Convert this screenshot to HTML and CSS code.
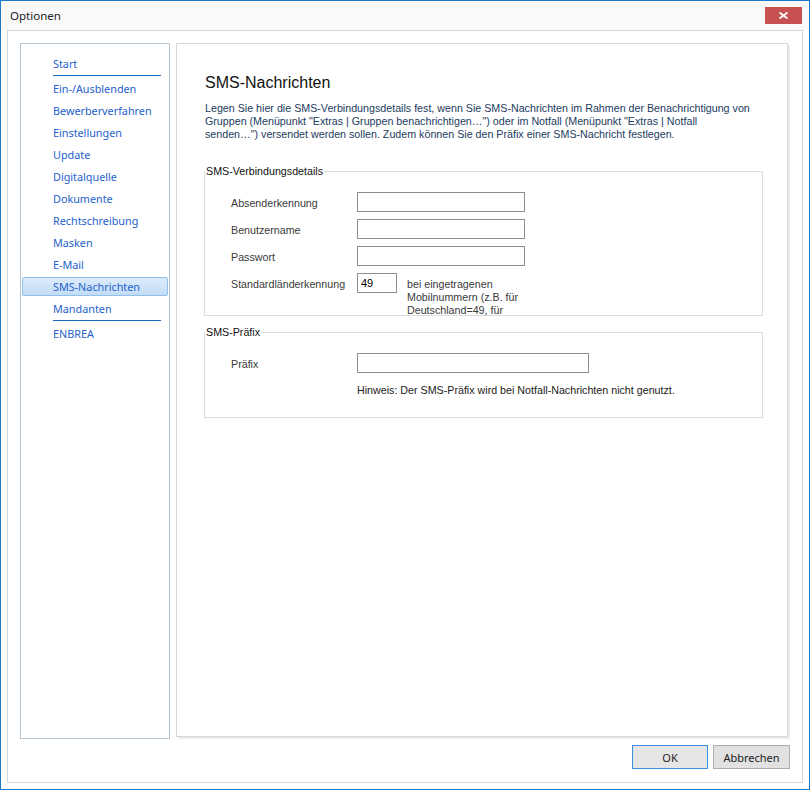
FILE: index.html
```html
<!DOCTYPE html>
<html lang="de">
<head>
    <meta charset="UTF-8">
    <title>Optionen</title>
    <link rel="stylesheet" href="styles.css">
</head>
<body>
    <div class="window">
        <div class="titlebar">
            <span class="title">Optionen</span>
            <button class="close" title="Schließen">
                <svg width="9" height="7" viewBox="0 0 9 7"><path d="M0.5 0.5 L8.5 6.5 M8.5 0.5 L0.5 6.5" stroke="#fff" stroke-width="1.8"/></svg>
            </button>
        </div>

        <div class="frame">
            <div class="panes">
                <ul class="nav">
                    <li class="nav-item">Start</li>
                    <li class="nav-sep"></li>
                    <li class="nav-item">Ein-/Ausblenden</li>
                    <li class="nav-item">Bewerberverfahren</li>
                    <li class="nav-item">Einstellungen</li>
                    <li class="nav-item">Update</li>
                    <li class="nav-item">Digitalquelle</li>
                    <li class="nav-item">Dokumente</li>
                    <li class="nav-item">Rechtschreibung</li>
                    <li class="nav-item">Masken</li>
                    <li class="nav-item">E-Mail</li>
                    <li class="nav-item active">SMS-Nachrichten</li>
                    <li class="nav-item">Mandanten</li>
                    <li class="nav-sep"></li>
                    <li class="nav-item">ENBREA</li>
                </ul>

                <div class="page">
                    <h1>SMS-Nachrichten</h1>
                    <p class="intro">
                        Legen Sie hier die SMS-Verbindungsdetails fest, wenn Sie SMS-Nachrichten im Rahmen der Benachrichtigung von<br>
                        Gruppen (Menüpunkt "Extras | Gruppen benachrichtigen…") oder im Notfall (Menüpunkt "Extras | Notfall<br>
                        senden…") versendet werden sollen. Zudem können Sie den Präfix einer SMS-Nachricht festlegen.
                    </p>

                    <fieldset class="group">
                        <legend>SMS-Verbindungsdetails</legend>
                        <div class="fields">
                            <label for="sender">Absenderkennung</label>
                            <input type="text" id="sender">

                            <label for="user">Benutzername</label>
                            <input type="text" id="user">

                            <label for="password">Passwort</label>
                            <input type="password" id="password">

                            <label for="country">Standardländerkennung</label>
                            <div class="country">
                                <input type="text" id="country" class="short" value="49">
                                <div class="country-note">bei eingetragenen<br>Mobilnummern (z.B. für<br>Deutschland=49, für</div>
                            </div>
                        </div>
                    </fieldset>

                    <fieldset class="group prefix-group">
                        <legend>SMS-Präfix</legend>
                        <div class="fields">
                            <label for="prefix">Präfix</label>
                            <input type="text" id="prefix" class="wide">

                            <span></span>
                            <p class="hint">Hinweis: Der SMS-Präfix wird bei Notfall-Nachrichten nicht genutzt.</p>
                        </div>
                    </fieldset>
                </div>
            </div>

            <div class="buttons">
                <button class="btn default">OK</button>
                <button class="btn">Abbrechen</button>
            </div>
        </div>
    </div>
</body>
</html>
```

FILE: styles.css
```css
* {
    box-sizing: border-box;
}

body {
    margin: 0;
    font-family: "Liberation Sans", Arial, sans-serif;
    font-size: 10.7px;
    color: #333;
    background: #fff;
}

.window {
    width: 810px;
    height: 790px;
    border: 1px solid #1979ca;
    display: flex;
    flex-direction: column;
    background: #fff;
}

.titlebar {
    height: 29px;
    flex: none;
    display: flex;
    justify-content: space-between;
    align-items: flex-start;
    background: #f9f9f9;
    padding: 0 7px 0 9px;
}

.title {
    font-family: "Noto Sans", sans-serif;
    font-size: 11.5px;
    line-height: 30px;
    color: #222;
}

.close {
    margin-top: 6px;
    width: 37px;
    height: 17px;
    border: none;
    padding: 0;
    background: #c75050;
    display: flex;
    align-items: center;
    justify-content: center;
}

.frame {
    flex: 1;
    margin: 0 6px 6px;
    border: 1px solid #d6d6d6;
    padding: 12px 12px 0;
    display: flex;
    flex-direction: column;
}

.panes {
    height: 696px;
    display: flex;
    gap: 6px;
}

/* left navigation list */
.nav {
    width: 150px;
    margin: 0;
    padding: 10px 0 0;
    list-style: none;
    border: 1px solid #b4c4d0;
}

.nav-item {
    height: 19px;
    margin: 0 1px 3px;
    padding-left: 30px;
    font-family: "Noto Sans", sans-serif;
    font-size: 10.8px;
    line-height: 18px;
    color: #2461cc;
    border: 1px solid transparent;
    border-radius: 2px;
    cursor: pointer;
}

.nav-item.active {
    background: linear-gradient(#dcebfb, #c3ddf6);
    border-color: #93c0e8;
}

.nav-sep {
    height: 1px;
    width: 108px;
    margin: -1px 0 3px 32px;
    background: #1c6ac2;
}

/* right content page */
.page {
    width: 612px;
    height: 694px;
    border: 1px solid #d8d8d8;
    box-shadow: 2px 2px 0 #ececec;
    padding: 29px 0 0 27px;
}

h1 {
    margin: 0 0 0 1px;
    font-family: "Liberation Sans", Arial, sans-serif;
    font-size: 16px;
    font-weight: normal;
    line-height: 19px;
    color: #111;
}

.intro {
    margin: 10px 0 0 1px;
    line-height: 13px;
    color: #223b5e;
    white-space: nowrap;
}

.group {
    width: 559px;
    margin: 24px 0 0;
    padding: 14px 0 0;
    border: 1px solid #dcdcdc;
}

.group legend {
    padding: 0 1px;
    margin-left: 0;
    line-height: 13px;
    color: #111;
}

.prefix-group {
    margin-top: 10px;
    padding-bottom: 20px;
}

.fields {
    display: grid;
    grid-template-columns: 126px auto;
    row-gap: 7px;
    justify-items: start;
    padding-left: 26px;
}

.fields label {
    padding-top: 5px;
    line-height: 13px;
    color: #3a3a3a;
}

.fields input {
    width: 168px;
    height: 20px;
    margin: 0;
    padding: 0 3px;
    border: 1px solid #8e8e8e;
    font-family: inherit;
    font-size: 11px;
    color: #000;
    outline: none;
}

.fields input.short {
    width: 40px;
}

.fields input.wide {
    width: 232px;
}

.country {
    display: flex;
    gap: 10px;
    align-items: flex-start;
}

.country-note {
    height: 37px;
    margin-top: 5px;
    line-height: 13px;
    color: #3a3a3a;
}

.hint {
    margin: 4px 0 0;
    line-height: 13px;
    color: #222;
}

.buttons {
    margin-top: 6px;
    display: flex;
    justify-content: flex-end;
    gap: 5px;
}

.btn {
    width: 77px;
    height: 24px;
    border: 1px solid #adadad;
    background: #e1e1e1;
    font-family: "Noto Sans", sans-serif;
    font-size: 11px;
    color: #222;
    padding: 0;
}

.btn.default {
    width: 76px;
    border-color: #3c8ee2;
    background: #e5e5e5;
}
```
